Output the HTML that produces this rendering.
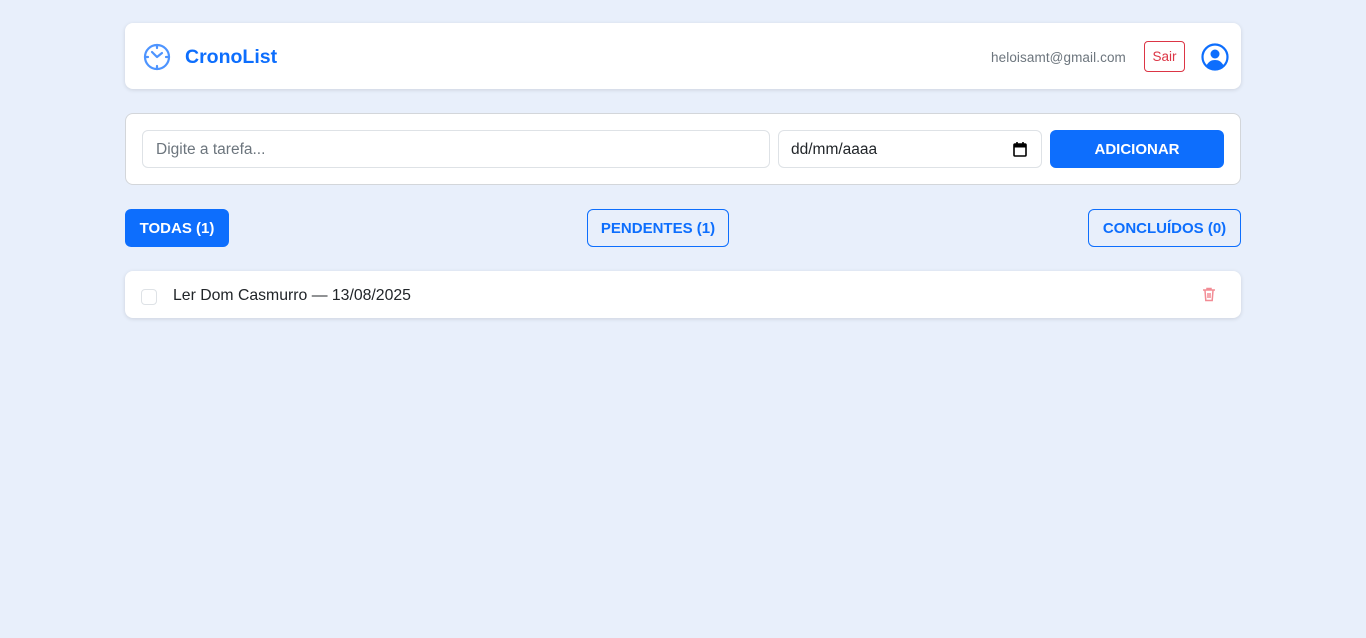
<!DOCTYPE html>
<html><head><meta charset="utf-8"><style>
*{box-sizing:border-box;margin:0;padding:0}
body{width:1366px;height:638px;background:#e8effb;font-family:"Liberation Sans",sans-serif;position:relative;overflow:hidden}
.card{position:absolute;background:#fff;border-radius:8px;box-shadow:0 1px 4px rgba(0,0,0,.12)}
.abs{position:absolute}
.btn{position:absolute;height:38px;border-radius:6px;font-weight:bold;font-size:15px;display:flex;align-items:center;justify-content:center;padding-top:1px}
</style></head><body>
<div class="card" style="left:125px;top:23px;width:1116px;height:66px"></div>
<svg class="abs" style="left:142px;top:42px" width="30" height="30" viewBox="0 0 30 30" fill="none" stroke="#4d94ff" stroke-width="2.2"><circle cx="15" cy="15" r="12"/><path d="M15 15L10 10M15 15l5-4M15 3v3M15 24v3M3 15h3M24 15h3" stroke-linecap="round"/></svg>
<div class="abs" style="left:185px;top:46px;font-size:19.5px;font-weight:bold;color:#0d6efd">CronoList</div>
<div class="abs" style="left:991px;top:50px;font-size:13.5px;color:#6c757d;letter-spacing:.1px">heloisamt@gmail.com</div>
<div class="abs" style="left:1144px;top:41px;width:41px;height:31px;border:1px solid #dc3545;border-radius:4px;color:#dc3545;font-size:13.5px;display:flex;align-items:center;justify-content:center">Sair</div>
<svg class="abs" style="left:1201px;top:43px" width="28" height="28" viewBox="0 0 28 28"><circle cx="14" cy="14" r="12.5" fill="none" stroke="#0d6efd" stroke-width="2.2"/><circle cx="14" cy="11" r="4.5" fill="#0d6efd"/><path d="M5.5 22.5c2-4 5-5.5 8.5-5.5s6.5 1.5 8.5 5.5c-2.2 2.2-5.2 3.5-8.5 3.5s-6.3-1.3-8.5-3.5z" fill="#0d6efd"/></svg>
<div class="card" style="left:125px;top:113px;width:1116px;height:72px;border:1px solid #d3d6da;box-shadow:none"></div>
<div class="abs" style="left:142px;top:130px;width:628px;height:38px;border:1px solid #dee2e6;border-radius:6px;padding:1px 13px 0;line-height:36px;font-size:15.5px;color:#6c757d">Digite a tarefa...</div>
<div class="abs" style="left:778px;top:130px;width:264px;height:38px;border:1px solid #dee2e6;border-radius:6px;padding:1px 12px 0;line-height:36px;font-size:15.5px;color:#212529">dd/mm/aaaa
<svg style="position:absolute;right:14px;top:11px" width="14" height="15" viewBox="0 0 14 15"><rect x="1" y="2" width="12" height="12" rx="1" fill="none" stroke="#000" stroke-width="1.6"/><rect x="1" y="2" width="12" height="3.5" fill="#000"/><path d="M4 0v3M10 0v3" stroke="#000" stroke-width="1.6"/></svg></div>
<div class="btn" style="left:1050px;top:130px;width:174px;background:#0d6efd;color:#fff">ADICIONAR</div>
<div class="btn" style="left:125px;top:209px;width:104px;background:#0d6efd;color:#fff">TODAS (1)</div>
<div class="btn" style="left:587px;top:209px;width:142px;border:1px solid #0d6efd;color:#0d6efd">PENDENTES (1)</div>
<div class="btn" style="left:1088px;top:209px;width:153px;border:1px solid #0d6efd;color:#0d6efd">CONCLUÍDOS (0)</div>
<div class="card" style="left:125px;top:271px;width:1116px;height:47px"></div>
<div class="abs" style="left:141px;top:289px;width:16px;height:16px;border:1px solid #dee2e6;border-radius:4px"></div>
<div class="abs" style="left:173px;top:287px;font-size:15.8px;color:#212529">Ler Dom Casmurro — 13/08/2025</div>
<svg class="abs" style="left:1202px;top:287px" width="14" height="15" viewBox="0 0 14 15" fill="none" stroke="#f28b94" stroke-width="1.5"><path d="M1 3h12M5 3V1.5h4V3M3 3.5l.8 10h6.4l.8-10M6 6v5M8 6v5"/></svg>
</body></html>
